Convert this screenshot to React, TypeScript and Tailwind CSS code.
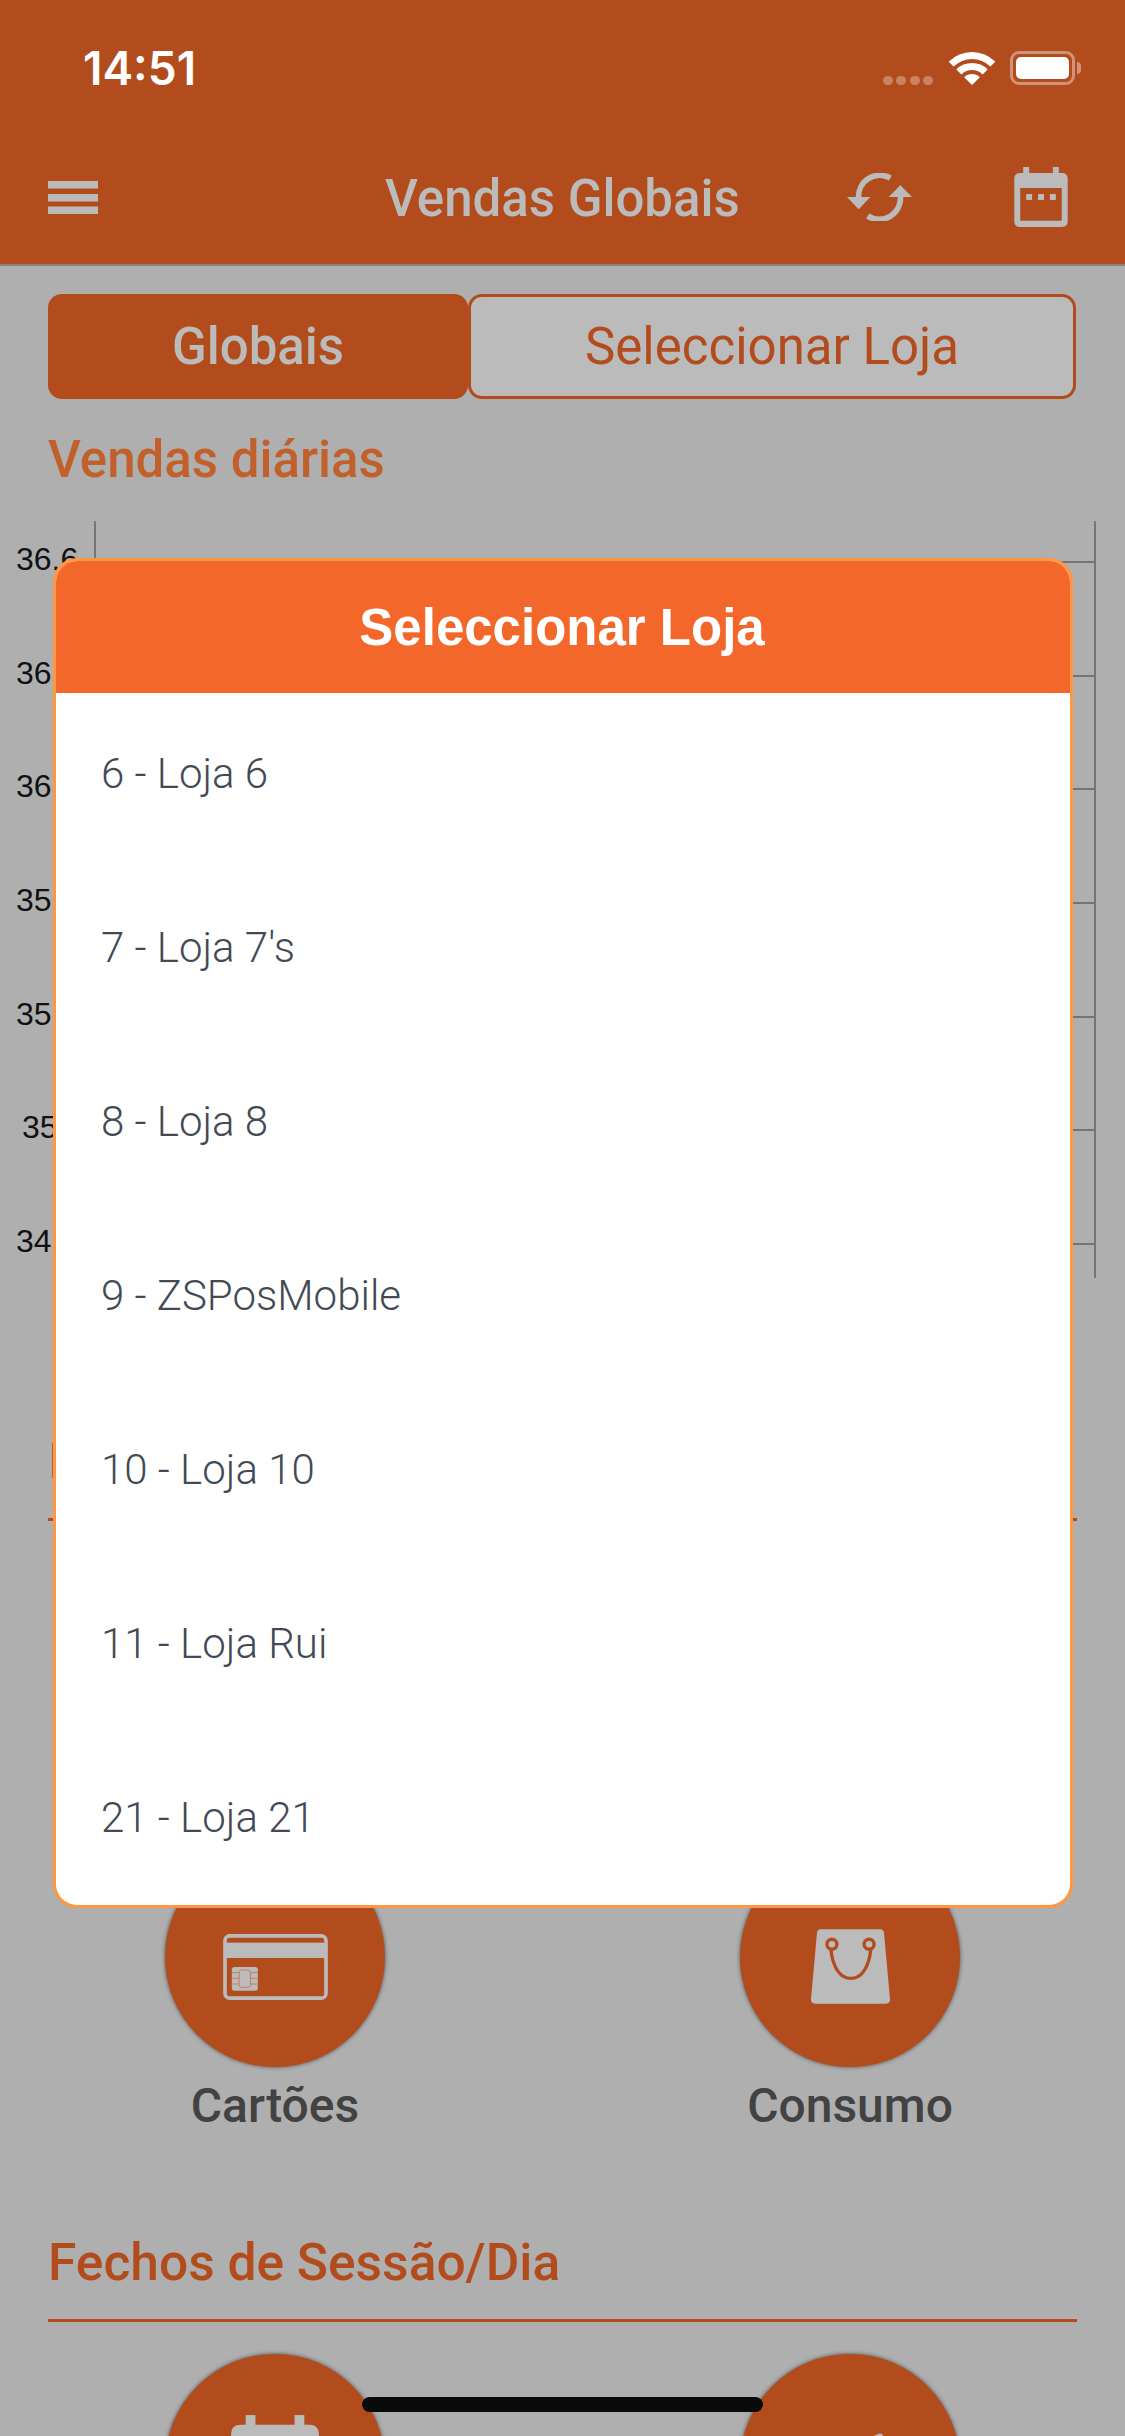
import React from "react";

const stores = ["6 - Loja 6", "7 - Loja 7's", "8 - Loja 8", "9 - ZSPosMobile", "10 - Loja 10", "11 - Loja Rui", "21 - Loja 21"];
const ticks = ["36.6", "36.3", "36.0", "35.7", "35.4", "35.1", "34.8"];

const CalendarIcon = ({ className }: { className: string }) => (
  <svg viewBox="582 50 162 182" className={className} fill="#bbbbbb">
    <rect x="609" y="50" width="18" height="24" />
    <rect x="699" y="50" width="18" height="24" />
    <path
      fillRule="evenodd"
      d="M600 68H726Q744 68 744 86V214Q744 232 726 232H600Q582 232 582 214V86Q582 68 600 68ZM600 114V213H726V114Z"
    />
    <rect x="618" y="132" width="18" height="18" />
    <rect x="654" y="132" width="18" height="18" />
    <rect x="690" y="132" width="18" height="18" />
  </svg>
);

const CardIcon = () => (
  <svg viewBox="280 282 314 198" className="w-[105px] h-[66px] mt-[20px]">
    <rect x="285.500" y="287.500" width="303" height="187" rx="14" fill="none" stroke="#bbbbbb" strokeWidth="11" />
    <rect x="285" y="308" width="304" height="46" fill="#bbbbbb" />
    <rect x="306" y="381" width="78" height="71" rx="8" fill="#bbbbbb" />
    <path d="M306 398H328M306 415H328M306 432H328M362 398H384M362 415H384M362 432H384" stroke="#c67f5f" strokeWidth="3" />
    <rect x="328" y="390" width="34" height="52" rx="8" fill="#bbbbbb" stroke="#c67f5f" strokeWidth="3" />
  </svg>
);

const BagIcon = () => (
  <svg viewBox="330 267 238 224" className="w-[79px] h-[75px] mt-[18px]">
    <path d="M360 267H538Q549 267 550 278L568 478Q568 491 556 491H342Q330 491 330 478L348 278Q349 267 360 267Z" fill="#bbbbbb" />
    <path d="M390 328C396 385 420 415 450 415C480 415 504 385 510 328" fill="none" stroke="#b34c1d" strokeWidth="10" />
    <circle cx="393" cy="312" r="15" fill="#bbbbbb" stroke="#b34c1d" strokeWidth="10" />
    <circle cx="505" cy="312" r="15" fill="#bbbbbb" stroke="#b34c1d" strokeWidth="10" />
  </svg>
);

const Circle = ({ children }: { children: React.ReactNode }) => (
  <div className="w-[220px] h-[220px] rounded-full bg-[#b34c1d] shadow-[0_0_4px_rgba(0,0,0,0.55)] flex items-center justify-center">
    {children}
  </div>
);

export default function App() {
  return (
    <div className="relative w-[1125px] h-[2436px] overflow-hidden bg-[#afafaf] font-['Roboto',sans-serif]">
      {/* header */}
      <header className="h-[266px] bg-[#b34c1d] border-b-2 border-[#8a8178]">
        <div className="flex items-center h-[138px] pl-[83px] pr-[44px] pb-[2px]">
          <span className="text-[46px] leading-none font-semibold text-white font-['Inter',sans-serif] w-[120px]">14:51</span>
          <div className="ml-auto flex items-end gap-[3.300px] h-[33px]">
            <span className="w-[10px] h-[9px] rounded-full bg-white/30" />
            <span className="w-[10px] h-[9px] rounded-full bg-white/30" />
            <span className="w-[10px] h-[9px] rounded-full bg-white/30" />
            <span className="w-[10px] h-[9px] rounded-full bg-white/30" />
          </div>
          <svg viewBox="0 0 46 33" className="w-[46px] h-[33px] ml-[16px]" fill="white">
            <path d="M-.300 9.700A33 33 0 0 1 46.300 9.700L41.400 14.600A26 26 0 0 0 4.600 14.600Z" />
            <path d="M7.400 17.400A22 22 0 0 1 38.600 17.400L33.600 22.400A15 15 0 0 0 12.400 22.400Z" />
            <path d="M15.200 25.200A11 11 0 0 1 30.800 25.200L23 33Z" />
          </svg>
          <div className="ml-[15px] flex items-center">
            <div className="w-[65px] h-[34px] rounded-[9px] border-[3px] border-white/40 p-[3px]">
              <div className="w-full h-full rounded-[5px] bg-white" />
            </div>
            <div className="w-[4px] h-[12px] rounded-r-full bg-white/40 ml-[2px]" />
          </div>
        </div>
        <div className="flex items-center h-[118px] pl-[48px] text-[#bbbbbb]">
          <svg viewBox="0 0 50 33" className="w-[50px] h-[33px]" fill="#bbbbbb">
            <rect y="0" width="50" height="7.500" />
            <rect y="13" width="50" height="7.500" />
            <rect y="25.500" width="50" height="7.500" />
          </svg>
          <h1 className="ml-[287px] mt-[2px] w-[354px] text-center whitespace-nowrap text-[51px] leading-none font-medium">Vendas Globais</h1>
          <svg viewBox="80 68 195 144" className="w-[65px] h-[48px] ml-[108px]" fill="#bbbbbb">
            <path d="M210 83A64 64 0 0 0 115 145" fill="none" stroke="#bbbbbb" strokeWidth="17" />
            <path d="M142 197A64 64 0 0 0 240 135" fill="none" stroke="#bbbbbb" strokeWidth="17" />
            <path d="M80 140H150L115 177Z" />
            <path d="M205 140H275L240 105Z" />
          </svg>
          <CalendarIcon className="w-[54px] h-[60px] ml-[102px]" />
        </div>
      </header>

      {/* segmented control */}
      <div className="flex mt-[28px] ml-[48px] w-[1028px] h-[105px]">
        <button className="w-[420px] pt-[2px] rounded-[14px] bg-[#b34c1d] text-[#bbbbbb] text-[51px] font-medium">Globais</button>
        <button className="w-[608px] pt-[2px] rounded-[14px] bg-[#bbbbbb] border-[3px] border-[#b34c1d] text-[#b34c1d] text-[51px]">Seleccionar Loja</button>
      </div>

      <h2 className="mt-[33px] ml-[48px] h-[56px] text-[51px] leading-[56px] font-medium text-[#c2602c]">Vendas diárias</h2>

      {/* chart */}
      <div className="flex mt-[33px] h-[757px]">
        <div className="w-[78px] pt-[20px] flex flex-col font-['Liberation_Sans',sans-serif] text-[32px] leading-[36px] text-[#111111] whitespace-nowrap">
          {ticks.map((t) => (
            <div key={t} className={t === "35.1" ? "h-[113.700px] shrink-0 pl-[22px]" : "h-[113.700px] shrink-0 pl-[16px]"}>{t}</div>
          ))}
        </div>
        <div className="ml-[16px] w-[1002px] border-x-2 border-[#757575] pt-[40px]">
          {ticks.map((t) => (
            <div key={t} className="h-[113.700px] border-t-2 border-[#757575]" />
          ))}
        </div>
      </div>

      {/* legend, mostly behind the dialog */}
      <div className="mt-[165px] ml-[52px] w-[200px] h-[35px] border-l-2 border-[#c2602c]" />
      <div className="mt-[40px] mx-[48px] h-[3px] bg-[#b34c1d]" />

      {/* actions */}
      <div className="mt-[326px] flex pl-[165px] gap-[355px]">
        <div className="w-[220px] flex flex-col items-center">
          <Circle><CardIcon /></Circle>
          <span className="mt-[11px] text-[48px] leading-[56px] font-medium text-[#424242] whitespace-nowrap">Cartões</span>
        </div>
        <div className="w-[220px] flex flex-col items-center">
          <Circle><BagIcon /></Circle>
          <span className="mt-[11px] text-[48px] leading-[56px] font-medium text-[#424242] whitespace-nowrap">Consumo</span>
        </div>
      </div>

      <h2 className="mt-[101px] ml-[48px] text-[51.500px] leading-[56px] font-medium text-[#b34c1d]">Fechos de Sessão/Dia</h2>
      <div className="mt-[28px] mx-[48px] h-[3px] bg-[#b34c1d]" />

      <div className="mt-[32px] flex pl-[165px] gap-[355px]">
        <Circle><CalendarIcon className="w-[88px] h-[99px]" /></Circle>
        <Circle>
          <svg viewBox="0 0 120 100" className="w-[120px] h-[100px] mt-[28px]" fill="#bbbbbb">
            <rect x="12" y="22" width="96" height="58" rx="4" transform="rotate(-25 60 50)" />
          </svg>
        </Circle>
      </div>

      {/* dialog */}
      <div className="absolute left-[53px] top-[558px] w-[1020px] h-[1350px] rounded-[24px] border-[3px] border-[#ff9642] bg-white overflow-hidden">
        <div className="h-[132px] pt-[2px] bg-[#f3672b] flex items-center justify-center text-white text-[51px] font-bold font-['Liberation_Sans',sans-serif] pr-[2px]">
          Seleccionar Loja
        </div>
        <ul className="pt-[56px] pl-[45px] flex flex-col gap-[124px]">
          {stores.map((s) => (
            <li key={s} className="h-[50px] text-[42px] leading-[50px] font-light text-[#434a54]">{s}</li>
          ))}
        </ul>
      </div>

      {/* home indicator */}
      <div className="absolute left-[362px] top-[2397px] w-[401px] h-[15px] rounded-[8px] bg-[#0a0a0a]" />
    </div>
  );
}
